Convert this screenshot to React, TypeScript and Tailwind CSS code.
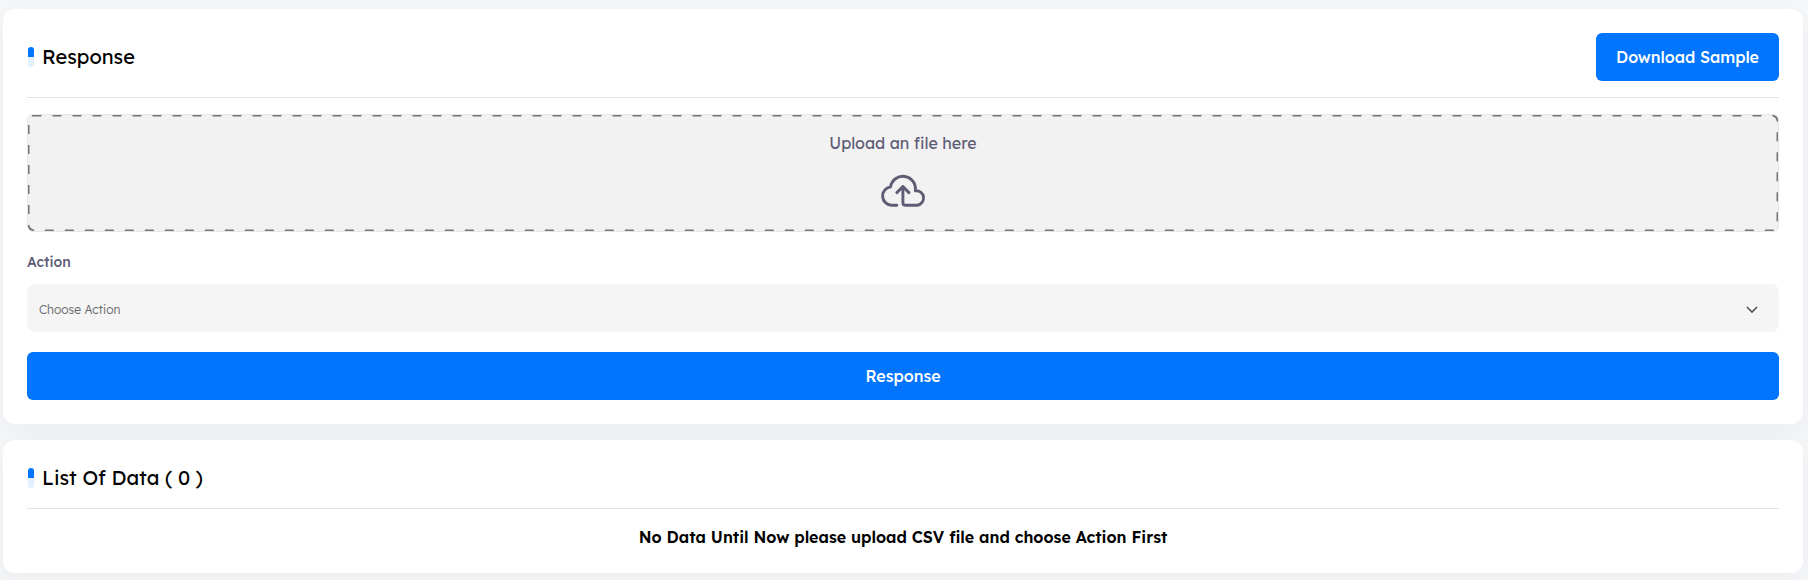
import React from "react";

const card =
  "rounded-xl bg-white px-6 shadow-[0_8px_28px_rgba(40,45,55,0.05)]";

function Title({ children }: { children: React.ReactNode }) {
  return (
    <div className="flex items-center">
      <span className="ml-px flex h-5 w-1.5 flex-col overflow-hidden rounded-full bg-[#e1f0ff]">
        <span className="h-2.5 bg-[#0275ff]" />
      </span>
      <h2 className="ml-2 text-[20px] leading-6 text-black">{children}</h2>
    </div>
  );
}

function CloudUpload() {
  return (
    <svg width="46" height="34" viewBox="0 0 46 34" fill="none" stroke="#5f5d76" strokeWidth="2.9" strokeLinecap="round" strokeLinejoin="round">
      <path d="M16.8 32.2H11.6A9.2 9.2 0 0 1 10.5 13.9A12.45 12.45 0 0 1 35.3 17.8A7.25 7.25 0 0 1 37.3 32.2H25.2Q22.9 32.2 22.9 29.8V13.9" />
      <path d="M16.8 19.6L22.9 13.6L29 19.6" />
    </svg>
  );
}

export default function App() {
  return (
    <div className="flex h-[580px] flex-col gap-4 overflow-hidden bg-[#f6f7f9] pt-[9px] pr-[5px] pl-[3px] font-['Lexend','Inter',sans-serif]">
      <section className={`${card} h-[415px] pt-6`}>
        <header className="flex h-[65px] items-start justify-between border-b border-[#e1e3e6]">
          <div className="flex h-12 items-center">
            <Title>Response</Title>
          </div>
          <button className="h-12 w-[183px] rounded-md bg-[#0275ff] text-base font-medium text-white">
            Download Sample
          </button>
        </header>
        <div className="mt-4 h-[118px] overflow-hidden rounded-md border border-[#e6e7ee] bg-[#f2f2f2]">
          <div className="relative flex h-full flex-col items-center pt-4">
            <svg className="absolute inset-0 h-full w-full" aria-hidden="true">
              <rect width="100%" height="100%" fill="none" rx="6" ry="6" stroke="#757575" strokeWidth="3" strokeDasharray="6 14" strokeLinecap="square" />
            </svg>
            <p className="text-base leading-6 text-[#5f5d76]">Upload an file here</p>
            <div className="mt-[18px]"><CloudUpload /></div>
          </div>
        </div>
        <label className="mt-5 block text-sm leading-5 font-medium text-[#5f5d76]">Action</label>
        <div className="mt-3 flex h-12 items-center justify-between rounded-lg bg-[#f5f5f5] pt-[3px] pr-[21px] pl-3">
          <span className="text-xs font-light text-[#666666]">Choose Action</span>
          <svg className="mt-px" width="12" height="8" viewBox="0 0 12 8" fill="none" stroke="#555" strokeWidth="1.6">
            <path d="M1 1L6 6L11 1" />
          </svg>
        </div>
        <button className="mt-5 h-12 w-full rounded-md bg-[#0275ff] text-base font-medium text-white">Response</button>
      </section>
      <section className={`${card} h-[133px]`}>
        <header className="flex h-[69px] items-center border-b border-[#e1e3e6] pt-2">
          <Title>List Of Data ( 0 )</Title>
        </header>
        <p className="mt-4 text-center text-base leading-6 font-semibold text-black">
          No Data Until Now please upload CSV file and choose Action First
        </p>
      </section>
    </div>
  );
}
